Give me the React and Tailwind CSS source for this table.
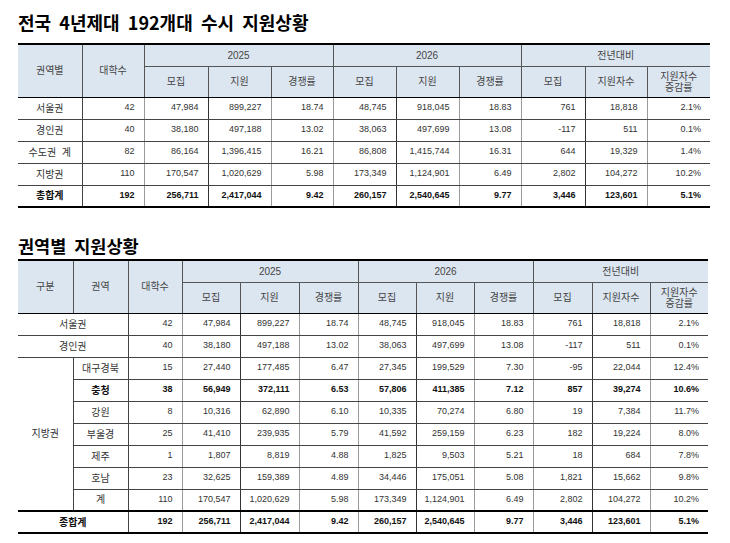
import React from 'react';

const FONT = 'font-["Liberation_Sans","Noto_Sans_CJK_KR",sans-serif]';

const summary = [
  ['서울권', '42', '47,984', '899,227', '18.74', '48,745', '918,045', '18.83', '761', '18,818', '2.1%'],
  ['경인권', '40', '38,180', '497,188', '13.02', '38,063', '497,699', '13.08', '-117', '511', '0.1%'],
  ['수도권 계', '82', '86,164', '1,396,415', '16.21', '86,808', '1,415,744', '16.31', '644', '19,329', '1.4%'],
  ['지방권', '110', '170,547', '1,020,629', '5.98', '173,349', '1,124,901', '6.49', '2,802', '104,272', '10.2%'],
];
const summaryTotal = ['총합계', '192', '256,711', '2,417,044', '9.42', '260,157', '2,540,645', '9.77', '3,446', '123,601', '5.1%'];

const capital = [
  ['서울권', '42', '47,984', '899,227', '18.74', '48,745', '918,045', '18.83', '761', '18,818', '2.1%'],
  ['경인권', '40', '38,180', '497,188', '13.02', '38,063', '497,699', '13.08', '-117', '511', '0.1%'],
];
const local = [
  ['대구경북', '15', '27,440', '177,485', '6.47', '27,345', '199,529', '7.30', '-95', '22,044', '12.4%'],
  ['충청', '38', '56,949', '372,111', '6.53', '57,806', '411,385', '7.12', '857', '39,274', '10.6%', true],
  ['강원', '8', '10,316', '62,890', '6.10', '10,335', '70,274', '6.80', '19', '7,384', '11.7%'],
  ['부울경', '25', '41,410', '239,935', '5.79', '41,592', '259,159', '6.23', '182', '19,224', '8.0%'],
  ['제주', '1', '1,807', '8,819', '4.88', '1,825', '9,503', '5.21', '18', '684', '7.8%'],
  ['호남', '23', '32,625', '159,389', '4.89', '34,446', '175,051', '5.08', '1,821', '15,662', '9.8%'],
  ['계', '110', '170,547', '1,020,629', '5.98', '173,349', '1,124,901', '6.49', '2,802', '104,272', '10.2%'],
];
const regionTotal = ['종합계', '192', '256,711', '2,417,044', '9.42', '260,157', '2,540,645', '9.77', '3,446', '123,601', '5.1%'];

const GROUP_END = [1, 4, 7];

const Head = ({ children, className = '', ...rest }) => (
  <th
    className={`bg-[#dce6f1] font-normal text-[#444] text-[10px] leading-[11px] border border-[#555] ${className}`}
    {...rest}>
    {children}
  </th>
);

const NumCells = ({ values, bold }) =>
  values.map((v, i) => (
    <td
      key={i}
      className={`text-right pr-[9px] text-[9px] border-b border-[#444] ${
        i === values.length - 1 ? '' : GROUP_END.includes(i) ? 'border-r border-r-[#333]' : 'border-r border-r-[#9a9a9a]'
      } ${bold ? 'font-bold text-[#111]' : 'text-[#333]'}`}>
      {v}
    </td>
  ));

const SubHeads = () => (
  <>
    <Head>모집</Head>
    <Head>지원</Head>
    <Head>경쟁률</Head>
    <Head>모집</Head>
    <Head>지원</Head>
    <Head>경쟁률</Head>
    <Head>모집</Head>
    <Head>지원자수</Head>
    <Head className="border-r-0">
      지원자수
      <br />
      증감률
    </Head>
  </>
);

const SummaryTable = () => (
  <table className="table-fixed border-collapse w-[692px] border-t-2 border-t-black">
    <colgroup>
      {[64, 62, 64, 63, 62, 63, 63, 62, 64, 62, 63].map((w, i) => (
        <col key={i} style={{ width: w }} />
      ))}
    </colgroup>
    <thead>
      <tr className="h-[22px]">
        <Head rowSpan={2} className="border-l-0 border-b-black">
          권역별
        </Head>
        <Head rowSpan={2} className="border-b-black">
          대학수
        </Head>
        <Head colSpan={3}>2025</Head>
        <Head colSpan={3}>2026</Head>
        <Head colSpan={3} className="border-r-0">
          전년대비
        </Head>
      </tr>
      <tr className="h-[31px] [&>th]:border-b-black">
        <SubHeads />
      </tr>
    </thead>
    <tbody>
      {summary.map(row => (
        <tr key={row[0]} className="h-[22px]">
          <td className="text-center text-[10px] text-[#333] border-b border-r border-[#444] whitespace-pre">
            {row[0] === '수도권 계' ? '수도권  계' : row[0]}
          </td>
          <NumCells values={row.slice(1)} />
        </tr>
      ))}
      <tr className="h-[22px] border-b-2 border-b-black border-t border-t-black">
        <td className="text-center text-[10px] font-bold text-[#111] border-r border-[#444]">{summaryTotal[0]}</td>
        <NumCells values={summaryTotal.slice(1)} bold />
      </tr>
    </tbody>
  </table>
);

const RegionTable = () => (
  <table className="table-fixed border-collapse w-[690px] border-t-2 border-t-black">
    <colgroup>
      {[55, 55, 54, 58, 59, 59, 58, 58, 59, 59, 58, 58].map((w, i) => (
        <col key={i} style={{ width: w }} />
      ))}
    </colgroup>
    <thead>
      <tr className="h-[22px]">
        <Head rowSpan={2} className="border-l-0 border-b-black">
          구분
        </Head>
        <Head rowSpan={2} className="border-b-black">
          권역
        </Head>
        <Head rowSpan={2} className="border-b-black">
          대학수
        </Head>
        <Head colSpan={3}>2025</Head>
        <Head colSpan={3}>2026</Head>
        <Head colSpan={3} className="border-r-0">
          전년대비
        </Head>
      </tr>
      <tr className="h-[31px] [&>th]:border-b-black">
        <SubHeads />
      </tr>
    </thead>
    <tbody>
      {capital.map(row => (
        <tr key={row[0]} className="h-[22px]">
          <td colSpan={2} className="text-center text-[10px] text-[#333] border-b border-r border-[#444]">
            {row[0]}
          </td>
          <NumCells values={row.slice(1)} />
        </tr>
      ))}
      {local.map((row, idx) => (
        <tr key={row[0]} className="h-[22px]">
          {idx === 0 && (
            <td rowSpan={local.length} className="text-center text-[10px] text-[#333] border-r border-[#444]">
              지방권
            </td>
          )}
          <td
            className={`text-center text-[10px] border-b border-r border-[#444] ${
              row[11] ? 'font-bold text-[#111]' : 'text-[#333]'
            }`}>
            {row[0]}
          </td>
          <NumCells values={row.slice(1, 11)} bold={row[11]} />
        </tr>
      ))}
      <tr className="h-[22px] border-b-2 border-b-black border-t-2 border-t-black">
        <td colSpan={2} className="text-center text-[10px] font-bold text-[#111] border-r border-[#444]">
          {regionTotal[0]}
        </td>
        <NumCells values={regionTotal.slice(1)} bold />
      </tr>
    </tbody>
  </table>
);

export default function App() {
  return (
    <div className={`w-[730px] h-[543px] bg-white pl-[18px] pt-[10px] ${FONT}`}>
      <h1 className="text-[18px] leading-[24px] font-bold text-black whitespace-pre font-['Noto_Sans_CJK_KR',sans-serif]">
        {'전국  4년제대  192개대  수시  지원상황'}
      </h1>
      <div className="mt-[9px]">
        <SummaryTable />
      </div>
      <h2 className="mt-[26px] text-[17.5px] leading-[24px] font-bold text-black whitespace-pre font-['Noto_Sans_CJK_KR',sans-serif]">
        {'권역별  지원상황'}
      </h2>
      <div className="mt-px">
        <RegionTable />
      </div>
    </div>
  );
}
